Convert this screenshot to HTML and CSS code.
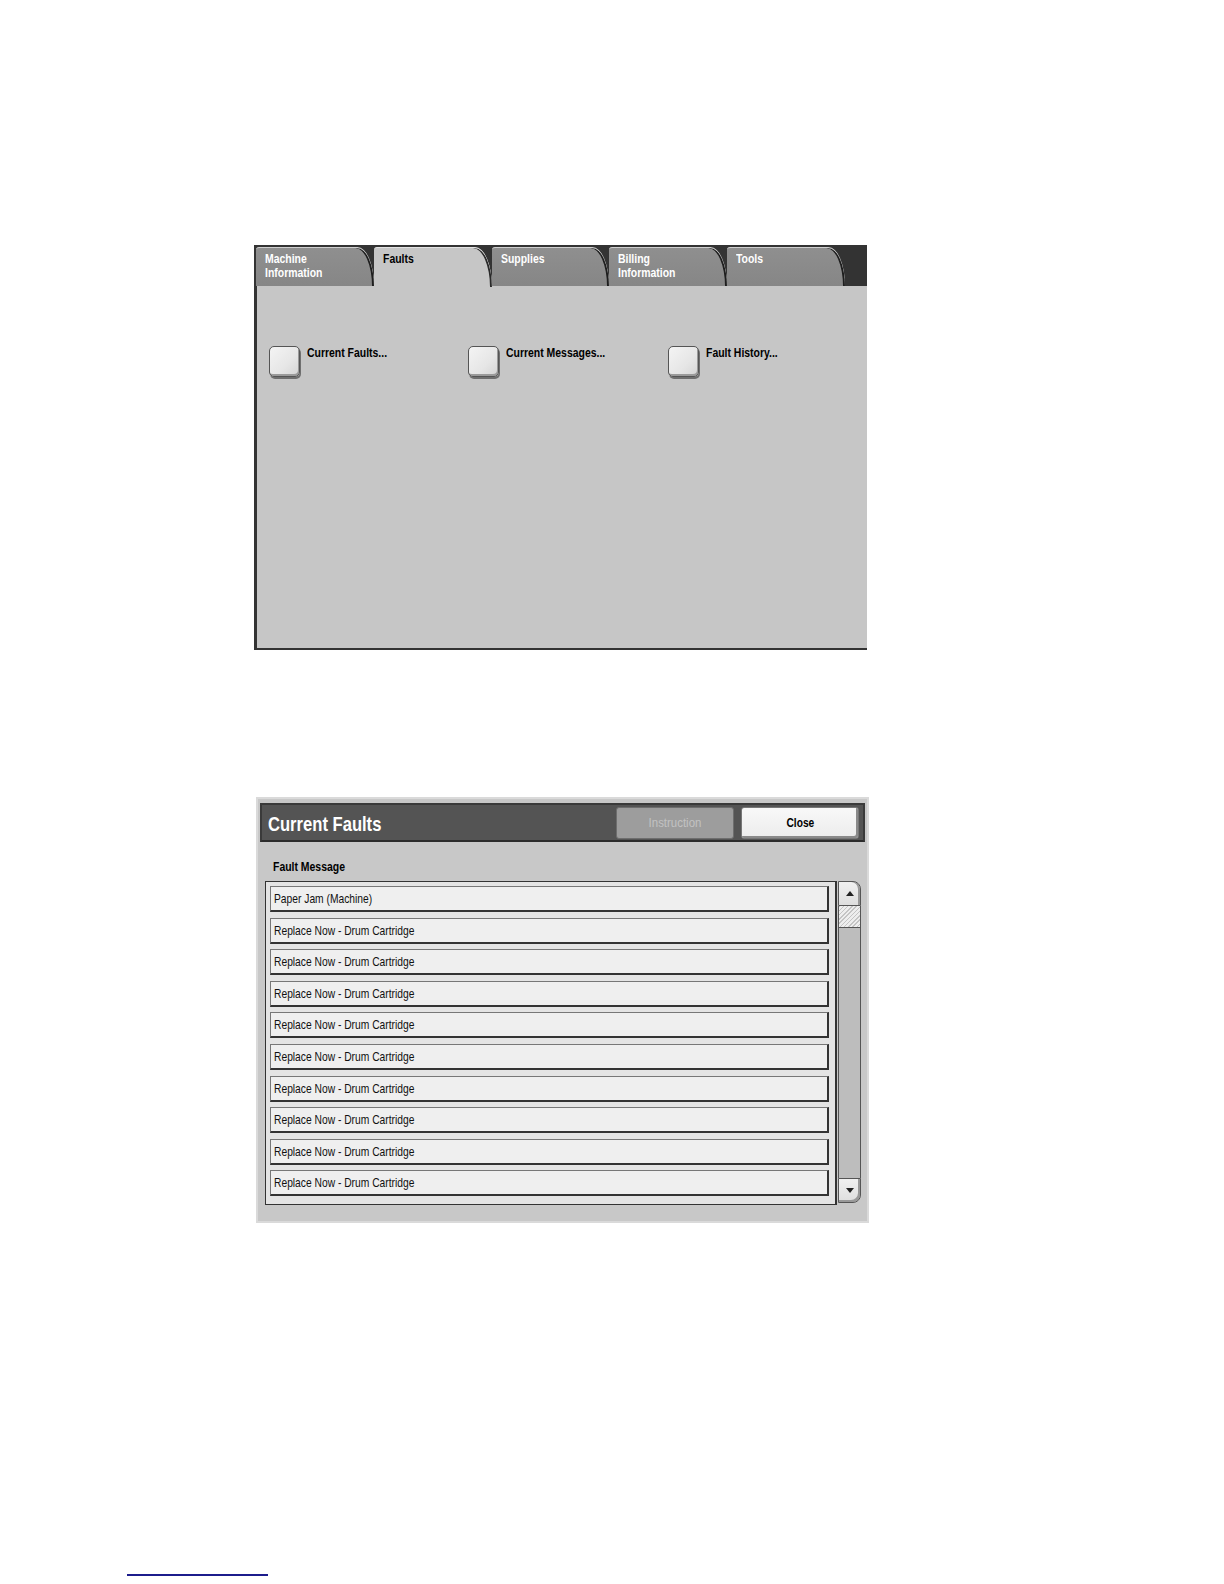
FILE: index.html
```html
<!DOCTYPE html>
<html>
<head>
<meta charset="utf-8">
<link rel="stylesheet" href="styles.css">
</head>
<body>
<div class="page">
  <div class="panel">
    <div class="tabstrip">
      <div class="tab"><span class="cn">Machine<br>Information</span></div>
      <div class="tab active"><span class="cn">Faults</span></div>
      <div class="tab"><span class="cn">Supplies</span></div>
      <div class="tab"><span class="cn">Billing<br>Information</span></div>
      <div class="tab"><span class="cn">Tools</span></div>
    </div>
    <div class="panel-body">
      <div class="opt"><div class="opt-box"></div><span class="opt-label cn">Current Faults...</span></div>
      <div class="opt"><div class="opt-box"></div><span class="opt-label cn">Current Messages...</span></div>
      <div class="opt"><div class="opt-box"></div><span class="opt-label cn">Fault History...</span></div>
    </div>
  </div>

  <div class="dialog">
    <div class="dlg-head">
      <div class="dlg-title"><span class="cn title-cn">Current Faults</span></div>
      <div class="btn btn-disabled"><span class="cn-c">Instruction</span></div>
      <div class="btn btn-close"><span class="cn-c">Close</span></div>
    </div>
    <div class="dlg-body">
      <div class="col-label"><span class="cn">Fault Message</span></div>
      <div class="list-wrap">
        <div class="list">
          <div class="row"><span class="cn row-cn">Paper Jam (Machine)</span></div>
          <div class="row"><span class="cn row-cn">Replace Now - Drum Cartridge</span></div>
          <div class="row"><span class="cn row-cn">Replace Now - Drum Cartridge</span></div>
          <div class="row"><span class="cn row-cn">Replace Now - Drum Cartridge</span></div>
          <div class="row"><span class="cn row-cn">Replace Now - Drum Cartridge</span></div>
          <div class="row"><span class="cn row-cn">Replace Now - Drum Cartridge</span></div>
          <div class="row"><span class="cn row-cn">Replace Now - Drum Cartridge</span></div>
          <div class="row"><span class="cn row-cn">Replace Now - Drum Cartridge</span></div>
          <div class="row"><span class="cn row-cn">Replace Now - Drum Cartridge</span></div>
          <div class="row"><span class="cn row-cn">Replace Now - Drum Cartridge</span></div>
        </div>
        <div class="scrollbar">
          <div class="sb-btn sb-up"><span class="arrow-up"></span></div>
          <div class="sb-thumb"></div>
          <div class="sb-track"></div>
          <div class="sb-btn sb-down"><span class="arrow-down"></span></div>
        </div>
      </div>
    </div>
  </div>

  <div class="footline"></div>
</div>
</body>
</html>
```

FILE: styles.css
```css
html, body {
  margin: 0;
  padding: 0;
  background: #ffffff;
}
body {
  font-family: "Liberation Sans", Arial, sans-serif;
  color: #000;
}
.page {
  width: 1224px;
  height: 1584px;
  padding-top: 245px;
  box-sizing: border-box;
  overflow: hidden;
}
/* condensed look: the device font is a narrow Helvetica */
.cn {
  display: inline-block;
  transform: scaleX(0.87);
  transform-origin: left center;
  white-space: nowrap;
}
.cn-c {
  display: inline-block;
  transform: scaleX(0.85);
  transform-origin: center center;
  white-space: nowrap;
}

/* ---------- Panel 1 ---------- */
.panel {
  width: 613px;
  margin-left: 254px;
}
.tabstrip {
  display: flex;
  height: 41px;
  background: #333333;
  padding-left: 2px;
  box-sizing: border-box;
  align-items: flex-end;
}
.tab {
  width: 117.8px;
  height: 39px;
  box-sizing: border-box;
  background: linear-gradient(#8f8f8f, #868686);
  border-top: 1px solid #d0d0d0;
  border-top-left-radius: 3px;
  border-top-right-radius: 17px 40px;
  box-shadow: inset -2px 0 0 #1e1e1e;
  padding: 4px 0 0 9px;
  color: #ffffff;
  font-size: 12px;
  font-weight: bold;
  line-height: 14px;
}
.tab.active {
  background: #c6c6c6;
  color: #000;
  border-top-color: #e4e4e4;
  box-shadow: inset -2px 0 0 #2a2a2a;
  height: 40px;
  margin-bottom: -1px;
}
.panel-body {
  height: 364px;
  background: #c6c6c6;
  border-left: 3px solid #333333;
  border-bottom: 2px solid #333333;
  box-sizing: border-box;
  display: flex;
  padding: 60px 0 0 12px;
}
.opt {
  width: 200.5px;
  display: flex;
  align-items: flex-start;
}
.opt-box {
  width: 31px;
  height: 31px;
  flex: none;
  box-sizing: border-box;
  border: 1px solid #555;
  border-radius: 5px;
  background: linear-gradient(135deg, #f4f4f4 0%, #e6e6e6 60%, #d4d4d4 100%);
  box-shadow: inset -1px -2px 0 #9a9a9a, 1px 2px 0 #6f6f6f;
}
.opt-label {
  margin-left: 7px;
  font-size: 12px;
  font-weight: bold;
  line-height: 14px;
}

/* ---------- Dialog ---------- */
.dialog {
  width: 613px;
  height: 426px;
  margin-left: 256px;
  margin-top: 147px;
  background: #c8c8c8;
  border: 2px solid #dadada;
  box-sizing: border-box;
  padding: 4px 2px 0 2px;
}
.dlg-head {
  height: 39px;
  box-sizing: border-box;
  background: #545454;
  border: 2px solid #3a3a3a;
  border-bottom-color: #2c2c2c;
  display: flex;
  align-items: center;
  padding: 0 4px 0 6px;
}
.dlg-title {
  flex: 1;
  color: #ffffff;
  font-size: 21px;
  font-weight: bold;
  line-height: 24px;
  padding-top: 2px;
}
.title-cn {
  transform: scaleX(0.79);
}
.btn {
  width: 118px;
  height: 32px;
  box-sizing: border-box;
  display: flex;
  align-items: center;
  justify-content: center;
  font-size: 12px;
  border-radius: 3px;
}
.btn-disabled {
  background: #9d9d9d;
  color: #c2c2c2;
  border: 1px solid #6e6e6e;
  margin-right: 7px;
  font-size: 13px;
}
.btn-disabled .cn-c {
  transform: scaleX(0.88);
}
.btn-close {
  background: linear-gradient(#f8f8f8, #ececec);
  color: #000;
  font-weight: bold;
  border: 1px solid #777;
  box-shadow: inset -2px -2px 0 #8a8a8a;
}
.dlg-body {
  padding: 18px 0 0 5px;
}
.col-label {
  font-size: 12px;
  font-weight: bold;
  line-height: 14px;
  padding-left: 8px;
}
.list-wrap {
  display: flex;
  margin-top: 7px;
  align-items: flex-start;
}
.list {
  width: 572px;
  height: 324px;
  box-sizing: border-box;
  border: 1px solid #333;
  border-right: 2px solid #333;
  background: #e4e4e4;
  padding: 4px 0 0 4px;
  display: flex;
  flex-direction: column;
  gap: 5.6px;
}
.row {
  width: 559px;
  height: 26px;
  flex: none;
  box-sizing: border-box;
  background: #efefef;
  border: 1px solid #777;
  border-right: 2px solid #333;
  border-bottom: 2px solid #333;
  font-size: 13px;
  line-height: 23px;
  padding-left: 3px;
  color: #111;
}
.row-cn {
  transform: scaleX(0.79);
}
.scrollbar {
  width: 23px;
  height: 322px;
  display: flex;
  flex-direction: column;
  margin-left: 1px;
  box-sizing: border-box;
}
.sb-btn {
  height: 25px;
  flex: none;
  box-sizing: border-box;
  background: linear-gradient(#f0f0f0, #dedede);
  border: 1px solid #555;
  display: flex;
  align-items: center;
  justify-content: center;
}
.sb-up {
  border-top-right-radius: 8px;
  box-shadow: inset -2px 0 0 #999;
}
.sb-down {
  border-bottom-right-radius: 8px;
  box-shadow: inset -2px -2px 0 #999;
}
.arrow-up {
  width: 0;
  height: 0;
  border-left: 4px solid transparent;
  border-right: 4px solid transparent;
  border-bottom: 5px solid #222;
}
.arrow-down {
  width: 0;
  height: 0;
  border-left: 4px solid transparent;
  border-right: 4px solid transparent;
  border-top: 5px solid #222;
}
.sb-thumb {
  height: 22px;
  flex: none;
  box-sizing: border-box;
  border: 1px solid #555;
  border-top: none;
  background: repeating-linear-gradient(135deg, #c4c4c4 0 1px, #eeeeee 1px 3px);
}
.sb-track {
  flex: 1;
  background: #bdbdbd;
  border-left: 1px solid #555;
  border-right: 1px solid #555;
}

/* ---------- footer line ---------- */
.footline {
  width: 141px;
  height: 2px;
  background: #1c1c8c;
  margin-left: 127px;
  margin-top: 351px;
}
```
